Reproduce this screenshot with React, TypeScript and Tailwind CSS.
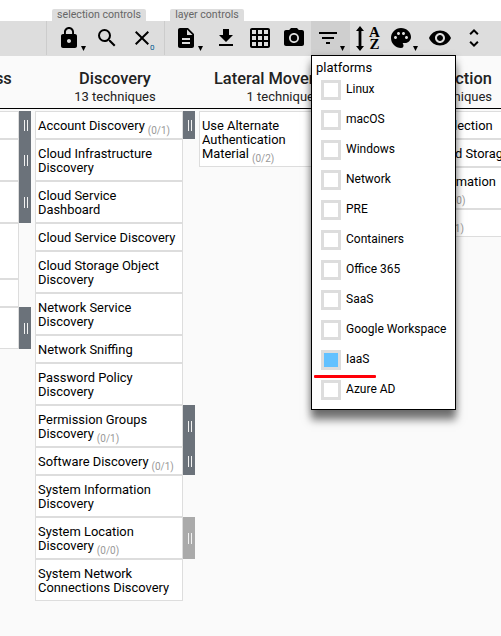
import type { ReactNode } from "react";
import {
  MdLock, MdSearch, MdClose, MdDescription, MdGetApp, MdGridOn, MdPhotoCamera,
  MdFilterList, MdPalette, MdVisibility, MdUnfoldMore,
} from "react-icons/md";

type Technique = { lines: string[]; count?: string; bar?: "dark" | "light" };

const access: Technique[] = [
  { lines: [""], bar: "dark" },
  { lines: ["", ""], bar: "dark" },
  { lines: ["", ""], bar: "dark" },
  { lines: ["", "", ""] },
  { lines: [""] },
  { lines: ["", ""], bar: "dark" },
];

const discovery: Technique[] = [
  { lines: ["Account Discovery"], count: "(0/1)", bar: "dark" },
  { lines: ["Cloud Infrastructure", "Discovery"] },
  { lines: ["Cloud Service", "Dashboard"] },
  { lines: ["Cloud Service Discovery"] },
  { lines: ["Cloud Storage Object", "Discovery"] },
  { lines: ["Network Service", "Discovery"] },
  { lines: ["Network Sniffing"] },
  { lines: ["Password Policy", "Discovery"] },
  { lines: ["Permission Groups", "Discovery"], count: "(0/1)", bar: "dark" },
  { lines: ["Software Discovery"], count: "(0/1)", bar: "dark" },
  { lines: ["System Information", "Discovery"] },
  { lines: ["System Location", "Discovery"], count: "(0/0)", bar: "light" },
  { lines: ["System Network", "Connections Discovery"] },
];

const lateral: Technique[] = [
  { lines: ["Use Alternate", "Authentication", "Material"], count: "(0/2)", bar: "dark" },
];

const collection: Technique[] = [
  { lines: ["Automated Collection"] },
  { lines: ["Data from Cloud Storage"] },
  { lines: ["Data from Information", "Repositories"], count: "(0/0)" },
  { lines: ["Data Staged"], count: "(0/1)" },
];

const platforms = [
  "Linux", "macOS", "Windows", "Network", "PRE", "Containers", "Office 365",
  "SaaS", "Google Workspace", "IaaS", "Azure AD",
];

function Row({ t }: { t: Technique }) {
  const height = ["h-0", "h-[28px]", "h-[42px]", "h-[56px]"][t.lines.length];
  return (
    <div className={`flex ${height}`}>
      <div className="flex flex-1 flex-col justify-center whitespace-nowrap border border-[#ddd] bg-white pl-[2px] pt-[2px]">
        {t.lines.map((line, i) => (
          <div key={i} className="h-[14px] leading-[14px]">
            {line}
            {t.count && i === t.lines.length - 1 && (
              <span className="relative top-[4px] ml-[3px] text-[10px] leading-none text-[#999]">{t.count}</span>
            )}
          </div>
        ))}
      </div>
      <div
        className={`flex w-3 items-center justify-center gap-[2px] pl-[2px] ${
          t.bar === "dark" ? "bg-[#6b727a]" : t.bar === "light" ? "bg-[#aaa]" : ""
        }`}
      >
        {t.bar && (
          <>
            <span className="h-[11px] w-px bg-[#f2f2f2]" />
            <span className="h-[11px] w-px bg-[#f2f2f2]" />
          </>
        )}
      </div>
    </div>
  );
}

function Column({ title, sub, rows, width }: { title: string; sub: string; rows: Technique[]; width: string }) {
  return (
    <section className={`mr-1 shrink-0 ${width}`}>
      <header className="-mr-1 h-[53px] whitespace-nowrap border-b border-black pr-1 pt-[13px] text-center text-[#222]">
        <div className="flex justify-center text-[16.4px] font-medium leading-[20px]">{title}</div>
        <div className="flex justify-center text-[13px] leading-[16px]">{sub}</div>
      </header>
      <div className="pt-[2px] text-[12.9px] text-black">
        {rows.map((t, i) => <Row key={i} t={t} />)}
      </div>
    </section>
  );
}

function Tool({ children, caret, className = "" }: { children: ReactNode; caret?: boolean; className?: string }) {
  return (
    <button className={`relative flex h-[34px] shrink-0 items-center text-[24px] ${className}`}>
      {children}
      {caret && (
        <svg className="absolute left-[24px] top-[25px] h-[5px] w-[5px]" viewBox="0 0 5 5">
          <path d="M0 0H5L2.5 5Z" />
        </svg>
      )}
    </button>
  );
}

export default function App() {
  return (
    <main className="relative h-[636px] w-[501px] overflow-hidden bg-[#fafafa] font-['Roboto',sans-serif] text-[12px]">
      <div className="flex h-[21px] items-end bg-white text-[10.6px] leading-[12px] text-[#666]">
        <div className="ml-[52px] h-[12px] w-[94px] whitespace-nowrap rounded-t-[2px] bg-[#ddd] text-center">selection controls</div>
        <div className="ml-[24px] h-[12px] w-[74px] whitespace-nowrap rounded-t-[2px] bg-[#ddd] text-center">layer controls</div>
      </div>
      <nav className="flex h-[34px] bg-[#ddd] text-black">
        <div className="w-[47px] shrink-0 border-r border-[#ccc]" />
        <Tool caret className="ml-[10px] w-[24px]"><MdLock /></Tool>
        <Tool className="ml-[14px] w-[24px]"><MdSearch /></Tool>
        <Tool className="ml-[11px] w-[24px]">
          <MdClose />
          <span className="absolute left-[20px] top-[22px] text-[8px] leading-[10px] text-[#005a90]">0</span>
        </Tool>
        <div className="ml-[10px] w-px bg-[#ccc]" />
        <Tool caret className="ml-[9px] w-[24px]"><MdDescription /></Tool>
        <Tool className="ml-[16px] w-[24px]"><MdGetApp /></Tool>
        <Tool className="ml-[10px] w-[24px]"><MdGridOn /></Tool>
        <Tool className="ml-[10px] w-[24px]"><MdPhotoCamera /></Tool>
        <Tool caret className="ml-[10px] w-[24px] before:absolute before:-left-[5px] before:top-0 before:h-[34px] before:w-[39px] before:bg-[#cfcfcf]">
          <MdFilterList className="relative" />
        </Tool>
        <Tool className="ml-[16px] w-[25px]">
          <svg className="h-[25px] w-[8px] shrink-0" viewBox="0 0 8 25">
            <path d="M4 0 8 5H5.4V20H8L4 25 0 20H2.6V5H0Z" />
          </svg>
          <span className="ml-[5px] font-['Liberation_Serif',serif] text-[15px] font-bold leading-[12px]">
            <span className="block">A</span>
            <span className="block">Z</span>
          </span>
        </Tool>
        <Tool caret className="ml-[8px] w-[24px]"><MdPalette /></Tool>
        <Tool className="ml-[15px] w-[24px]"><MdVisibility /></Tool>
        <Tool className="ml-[10px] w-[24px]"><MdUnfoldMore /></Tool>
      </nav>
      <div className="-ml-[140px] flex border-t border-[#ddd]">
        <Column title="Credential Access" sub="6 techniques" rows={access} width="w-[171px]" />
        <Column title="Discovery" sub="13 techniques" rows={discovery} width="w-[160px]" />
        <Column title="Lateral Movement" sub="1 technique" rows={lateral} width="w-[162.5px]" />
        <Column title="Collection" sub="4 techniques" rows={collection} width="w-[179px]" />
      </div>
      <div className="absolute left-[311px] top-[55px] h-[355px] w-[145px] border border-black bg-white shadow-[0_10px_8px_rgba(0,0,0,0.5),0_2px_8px_rgba(0,0,0,0.2)]">
        <div className="pl-[4px] pt-[5px] text-[13px] leading-[14px] text-black">platforms</div>
        <div className="flex flex-col gap-[10px] pl-[9px] pt-[5px]">
          {platforms.map((p) => (
            <label key={p} className="flex h-[20px] gap-[5px] whitespace-nowrap text-black">
              <span className={`h-[20px] w-[20px] border-[3px] border-[#ddd] ${p === "IaaS" ? "bg-[#62c1ff]" : "bg-white"}`} />
              <span className="leading-[18px]">{p}</span>
            </label>
          ))}
        </div>
        <div className="absolute left-[2px] top-[319px] h-[3px] w-[62px] rounded-[1px] bg-[#ff0008]" />
      </div>
    </main>
  );
}
